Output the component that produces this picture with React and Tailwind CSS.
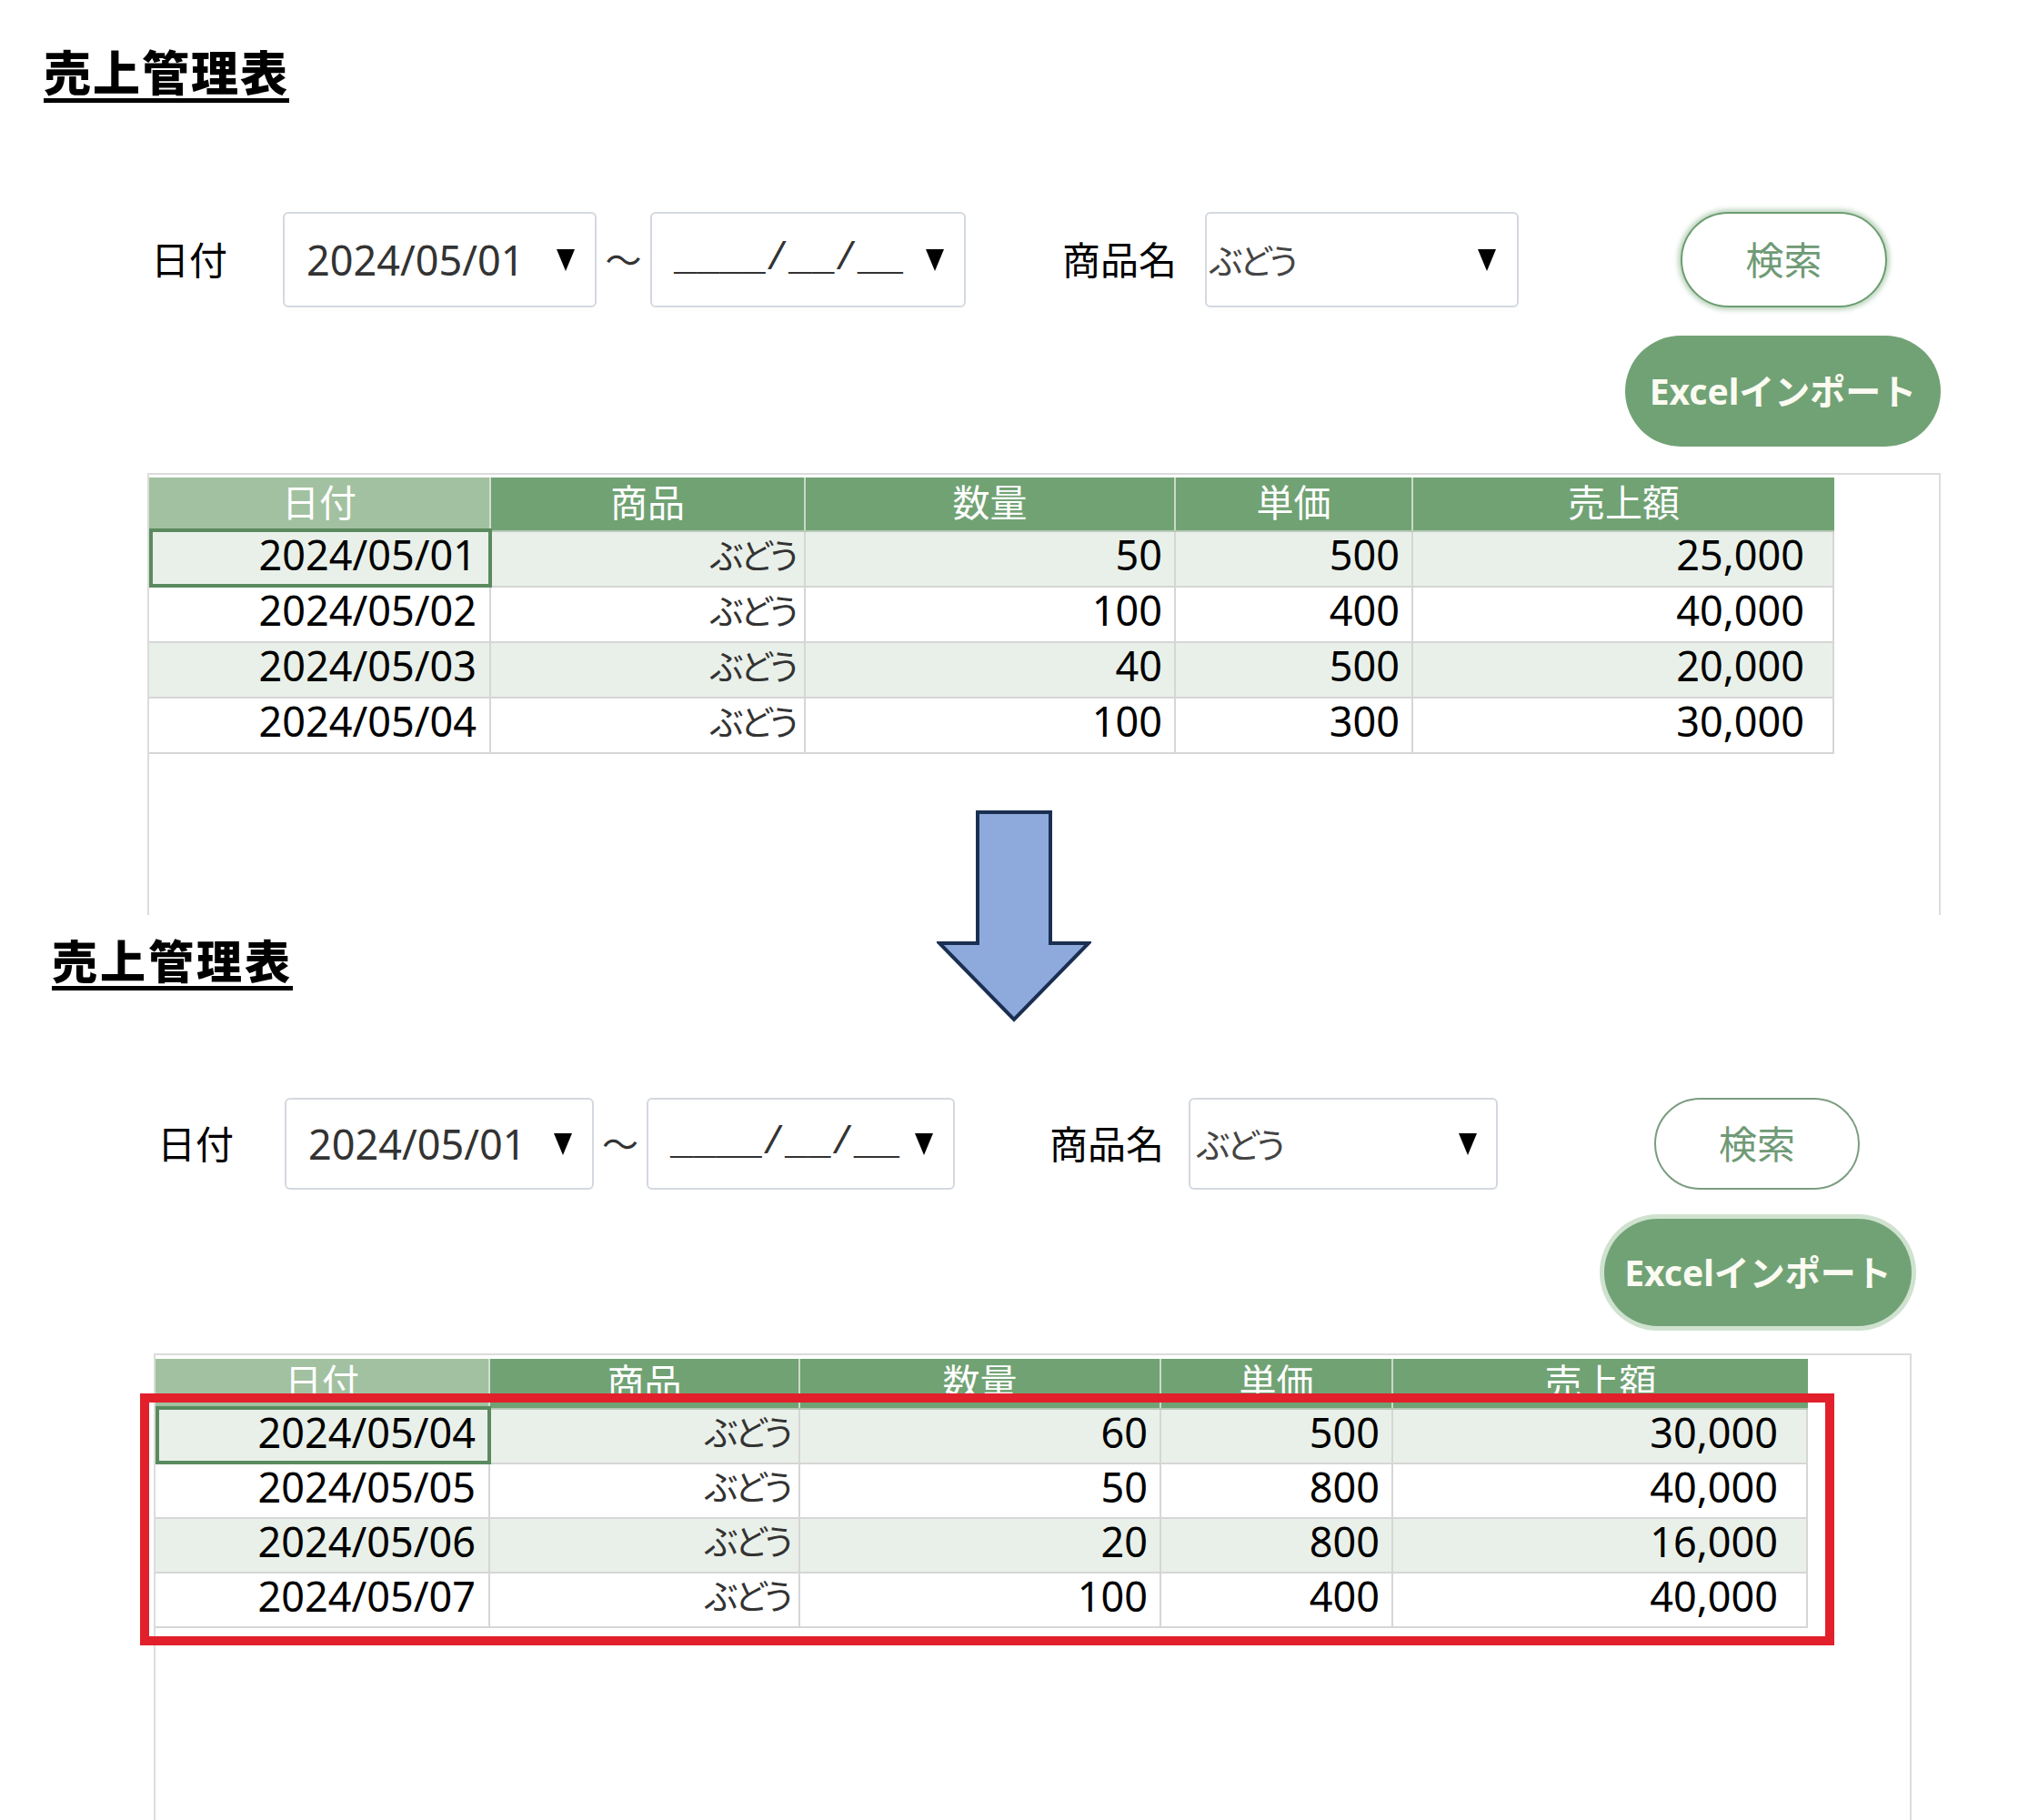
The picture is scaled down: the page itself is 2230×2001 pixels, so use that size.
import React from "react";

// 2つの画面キャプチャ(検索前/検索後)を縦に並べたレイアウト
const TOP = {
  title: "mt-[52px] ml-[48px] text-[52px] leading-[56px] tracking-[2px]",
  ctrlRow: "mt-[120px] pl-[166px]",
  h: "h-[105px]",
  dateLabel: "w-[145px]",
  box1: "w-[345px]",
  tilde: "w-[59px]",
  box2: "w-[347px]",
  nameLabel: "ml-[106px] w-[157px]",
  select: "w-[345px] pl-[3px] pr-[23px]",
  search:
    "ml-[178px] w-[227px] border-[#6c9d71] shadow-[0_0_5px_3px_rgba(114,163,116,0.45)]",
  excelRow: "w-[2134px] mt-[31px]",
  excel: "w-[347px] h-[122px]",
  container: "mt-[29px] ml-[162px] w-[1972px] h-[486px] pt-[3px]",
  cols: "grid-cols-[376px_346px_407px_261px_463px]",
  head: "h-[60px]",
  row: "h-[61px]",
};

const BOTTOM = {
  title: "mt-[24px] ml-[57px] text-[50px] leading-[54px] tracking-[3px]",
  ctrlRow: "mt-[118px] pl-[173px]",
  h: "h-[101px]",
  dateLabel: "w-[140px]",
  box1: "w-[340px]",
  tilde: "w-[58px]",
  box2: "w-[339px]",
  nameLabel: "ml-[104px] w-[153px]",
  select: "w-[340px] pl-[7px] pr-[21px]",
  search: "ml-[172px] w-[226px] border-[#7b9c80]",
  excelRow: "w-[2102px] mt-[32px]",
  excel: "w-[338px] h-[118px] ring-[5px] ring-[#cfe2cf]",
  container: "mt-[30px] ml-[169px] w-[1933px] h-[513px] pt-[4px]",
  cols: "grid-cols-[368px_341px_397px_255px_456px]",
  head: "h-[56px]",
  row: "h-[60px]",
};

const topRows = [
  ["2024/05/01", "50", "500", "25,000"],
  ["2024/05/02", "100", "400", "40,000"],
  ["2024/05/03", "40", "500", "20,000"],
  ["2024/05/04", "100", "300", "30,000"],
];

const bottomRows = [
  ["2024/05/04", "60", "500", "30,000"],
  ["2024/05/05", "50", "800", "40,000"],
  ["2024/05/06", "20", "800", "16,000"],
  ["2024/05/07", "100", "400", "40,000"],
];

const Caret = () => (
  <svg width="20" height="24" viewBox="0 0 20 24" className="shrink-0">
    <polygon points="0,0 20,0 10,24" fill="#000" />
  </svg>
);

const Budou = ({ className = "" }) => (
  <span
    className={`text-[38px] leading-none tracking-[-3px] [font-feature-settings:'palt'] ${className}`}
  >
    ぶどう
  </span>
);

const cell = "flex items-center justify-end border-r-2 border-b-2 border-[#d6d6d6] pb-[10px]";

const Screen = ({ s, rows }) => {
  return (
    <div>
      {/* タイトル */}
      <div className={s.title}>
        <span className="inline-block border-b-[5px] border-black font-black text-black">
          売上管理表
        </span>
      </div>

      {/* 検索条件 */}
      <div className={`flex items-center ${s.ctrlRow}`}>
        <div className={`text-[42px] text-black ${s.dateLabel}`}>日付</div>
        <div
          className={`flex items-center justify-between rounded-[6px] border-2 border-[#d3d8e0] bg-white pl-[24px] pr-[22px] ${s.h} ${s.box1}`}
        >
          <span className="text-[45px] text-[#333]">2024/05/01</span>
          <Caret />
        </div>
        <div className={`flex justify-center text-[40px] text-[#333] ${s.tilde}`}>〜</div>
        <div
          className={`flex items-center justify-between rounded-[6px] border-2 border-[#d3d8e0] bg-white pl-[24px] pr-[22px] ${s.h} ${s.box2}`}
        >
          <span className="font-['Liberation_Mono',monospace] text-[42px] text-[#333]">
            ____/__/__
          </span>
          <Caret />
        </div>
        <div className={`text-[42px] text-black ${s.nameLabel}`}>商品名</div>
        <div
          className={`flex items-center justify-between rounded-[6px] border-2 border-[#d3d8e0] bg-white ${s.h} ${s.select}`}
        >
          <Budou className="text-[#444]" />
          <Caret />
        </div>
        <button
          className={`flex items-center justify-center rounded-full border-2 bg-white text-[42px] text-[#6f9a76] ${s.h} ${s.search}`}
        >
          検索
        </button>
      </div>

      <div className={`flex justify-end ${s.excelRow}`}>
        <button
          className={`flex items-center justify-center rounded-full bg-[#71a275] text-[39px] font-bold text-[#fbfbf2] ${s.excel}`}
        >
          Excelインポート
        </button>
      </div>

      {/* 一覧 */}
      <div className={`border-x-2 border-t-2 border-[#dcdcdc] ${s.container}`}>
        <div
          className={`grid w-max ${s.cols} ${s.head} border-b-2 border-[#b8cab7] text-[41px] leading-none text-white`}
        >
          <div className="flex items-center justify-center border-r-2 border-[#d3dfd2] bg-[#a2c1a0] pb-[4px]">日付</div>
          <div className="flex items-center justify-center border-r-2 border-[#c9d9c8] bg-[#71a274] pb-[4px]">商品</div>
          <div className="flex items-center justify-center border-r-2 border-[#c9d9c8] bg-[#71a274] pb-[4px]">数量</div>
          <div className="flex items-center justify-center border-r-2 border-[#c9d9c8] bg-[#71a274] pb-[4px]">単価</div>
          <div className="flex items-center justify-center bg-[#71a274] pb-[4px]">売上額</div>
        </div>
        {rows.map((r, i) => (
          <div
            key={r[0]}
            className={`grid w-max ${s.cols} ${s.row} text-[45px] leading-none text-black ${
              i % 2 === 0 ? "bg-[#e9f0e9]" : "bg-white"
            }`}
          >
            <div className={`relative pr-[14px] ${cell}`}>
              {i === 0 && (
                <div className="absolute -top-[4px] -bottom-[2px] left-0 -right-[3px] border-[4px] border-[#5a8a5f]" />
              )}
              {r[0]}
            </div>
            <div className={`pr-[9px] ${cell}`}>
              <Budou className="text-[#333]" />
            </div>
            <div className={`pr-[13px] ${cell}`}>{r[1]}</div>
            <div className={`pr-[13px] ${cell}`}>{r[2]}</div>
            <div className={`pr-[31px] ${cell}`}>{r[3]}</div>
          </div>
        ))}
      </div>
    </div>
  );
};

export default function App() {
  return (
    <div className="relative h-[2001px] w-[2230px] overflow-hidden bg-white font-['Noto_Sans','Noto_Sans_CJK_JP',sans-serif]">
      <Screen s={TOP} rows={topRows} />
      <Screen s={BOTTOM} rows={bottomRows} />

      {/* 矢印 */}
      <svg
        className="absolute left-[1030px] top-[891px]"
        width="170"
        height="234"
        viewBox="0 0 170 234"
      >
        <polygon
          points="45,2 125,2 125,146 167,146 85,230 3,146 45,146"
          fill="#8eaadc"
          stroke="#1b2f52"
          strokeWidth="4"
          strokeLinejoin="miter"
        />
      </svg>

      {/* 変更箇所の強調枠 */}
      <div className="absolute left-[154px] top-[1532px] h-[277px] w-[1863px] border-[10px] border-[#e2202b]" />
    </div>
  );
}
